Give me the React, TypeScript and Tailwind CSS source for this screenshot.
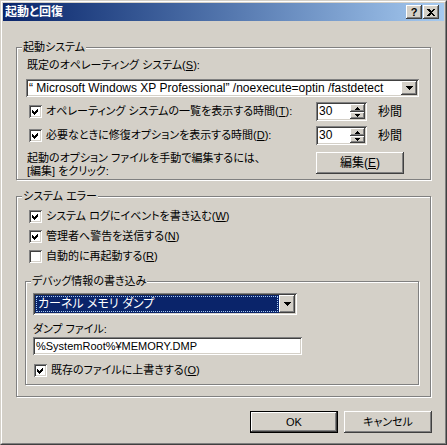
import type { ReactNode } from "react"

const raised =
  "bg-[#D4D0C8] shadow-[inset_-1px_-1px_#404040,inset_1px_1px_#fff,inset_-2px_-2px_#808080,inset_2px_2px_#D4D0C8]"
const sunken =
  "shadow-[inset_1px_1px_#808080,inset_-1px_-1px_#fff,inset_2px_2px_#404040,inset_-2px_-2px_#D4D0C8]"

function Check({ on }: { on: boolean }) {
  return (
    <span className={`block w-[13px] h-[13px] shrink-0 bg-white ${sunken}`}>
      {on && (
        <svg width="13" height="13" viewBox="0 0 13 13" className="block" shapeRendering="crispEdges">
          <path d="M3 5L5 7L9 3V6L5 10L3 8Z" fill="#000" />
        </svg>
      )}
    </span>
  )
}

function CheckRow({ on, children, className = "" }: { on: boolean; children: ReactNode; className?: string }) {
  return (
    <div className={`flex items-center h-[13px] ${className}`}>
      <Check on={on} />
      <span className="ml-[4px] leading-[13px] whitespace-nowrap">{children}</span>
    </div>
  )
}

function Arrow({ up = false, small = false }: { up?: boolean; small?: boolean }) {
  const w = small ? 5 : 7
  const h = small ? 3 : 4
  return (
    <svg width={w} height={h} viewBox={`0 0 ${w} ${h}`} shapeRendering="crispEdges" className="block">
      <path d={up ? `M0 ${h}L${w / 2} 0L${w} ${h}Z` : `M0 0L${w} 0L${w / 2} ${h}Z`} fill="#000" />
    </svg>
  )
}

function DropBtn() {
  return (
    <div className={`flex w-[16px] h-full shrink-0 items-center justify-center ${raised}`}>
      <Arrow />
    </div>
  )
}

function Spin() {
  return (
    <div className={`flex w-[51px] h-[19px] bg-white p-[2px] ${sunken}`}>
      <span className="flex-1 pl-[1px] leading-[15px] text-[12px]">30</span>
      <div className="flex w-[15px] flex-col">
        <div className={`flex h-[8px] items-center justify-center ${raised}`}>
          <Arrow up small />
        </div>
        <div className={`flex h-[7px] items-center justify-center ${raised}`}>
          <Arrow small />
        </div>
      </div>
    </div>
  )
}

function Group({ title, className, children }: { title: string; className: string; children: ReactNode }) {
  return (
    <div className={`relative border border-[#808080] shadow-[1px_1px_0_#fff,inset_1px_1px_0_#fff] ${className}`}>
      <span className="absolute left-[5px] top-[-8px] bg-[#D4D0C8] px-px leading-[14px] whitespace-nowrap">
        {title}
      </span>
      {children}
    </div>
  )
}

export default function App() {
  return (
    <div className="w-[447px] h-[445px] border border-t-[#D4D0C8] border-l-[#D4D0C8] border-b-[#404040] border-r-[#404040] bg-[#D4D0C8] text-[11px] text-black font-['Liberation_Sans','Noto_Sans_CJK_JP',sans-serif] [font-feature-settings:'palt']">
      <div className="h-full border border-t-white border-l-white border-b-[#808080] border-r-[#808080] p-px">
        {/* title bar */}
        <div className="flex h-[18px] items-center bg-linear-to-r from-[#0A246A] to-[#A6CAF0] pl-[2px] pr-[5px]">
          <span className="flex-1 font-bold text-white text-[12px] leading-[18px]">起動と回復</span>
          <div className={`flex w-[16px] h-[14px] items-center justify-center text-[11px] font-bold leading-none ${raised}`}>
            ?
          </div>
          <div className={`ml-[1px] flex w-[16px] h-[14px] items-center justify-center ${raised}`}>
            <svg width="8" height="7" viewBox="0 0 8 7" shapeRendering="crispEdges">
              <path d="M0 0H2L4 2L6 0H8L5 3.5L8 7H6L4 5L2 7H0L3 3.5Z" fill="#000" />
            </svg>
          </div>
        </div>

        {/* 起動システム */}
        <Group title="起動システム" className="ml-[13px] mt-[26px] w-[415px] h-[133px]">
          <div className="pl-[10px] pt-[10px] leading-[14px]">
            既定のオペレーティング システム(<u>S</u>):
          </div>
          <div className={`ml-[9px] mt-[7px] flex w-[393px] h-[18px] bg-white p-[2px] ${sunken}`}>
            <span className="flex-1 overflow-hidden whitespace-nowrap pl-[1px] text-[12px] leading-[14px]">
              “ Microsoft Windows XP Professional” /noexecute=optin /fastdetect
            </span>
            <DropBtn />
          </div>
          <div className="ml-[12px] mt-[5px] flex h-[19px] items-center">
            <div className="w-[287px]">
              <CheckRow on>
                オペレーティング システムの一覧を表示する時間(<u>T</u>):
              </CheckRow>
            </div>
            <Spin />
            <span className="ml-[11px] text-[12px]">秒間</span>
          </div>
          <div className="ml-[12px] mt-[5px] flex h-[19px] items-center">
            <div className="w-[287px]">
              <CheckRow on>
                必要なときに修復オプションを表示する時間(<u>D</u>):
              </CheckRow>
            </div>
            <Spin />
            <span className="ml-[11px] text-[12px]">秒間</span>
          </div>
          <div className="ml-[10px] mt-[7px] flex items-start">
            <div className="w-[289px] leading-[13px]">
              <div>起動のオプション ファイルを手動で編集するには、</div>
              <div>[編集] をクリック:</div>
            </div>
            <div className={`flex w-[88px] h-[22px] items-center justify-center text-[12px] ${raised}`}>
              編集(<u>E</u>)
            </div>
          </div>
        </Group>

        {/* システム エラー */}
        <Group title="システム エラー" className="ml-[13px] mt-[16px] w-[415px] h-[201px]">
          <CheckRow on className="ml-[12px] mt-[13px]">
            システム ログにイベントを書き込む(<u>W</u>)
          </CheckRow>
          <CheckRow on className="ml-[12px] mt-[7px]">
            管理者へ警告を送信する(<u>N</u>)
          </CheckRow>
          <CheckRow on={false} className="ml-[12px] mt-[7px]">
            自動的に再起動する(<u>R</u>)
          </CheckRow>

          <Group title="デバッグ情報の書き込み" className="ml-[8px] mt-[18px] w-[394px] h-[104px]">
            <div className={`ml-[7px] mt-[11px] flex w-[264px] h-[22px] bg-white p-[2px] ${sunken}`}>
              <div className="flex-1 bg-[#0A246A] p-px">
                <div className="h-full border border-dotted border-[#A6CAF0] pl-px text-[12px] leading-[14px] text-white whitespace-nowrap">
                  カーネル メモリ ダンプ
                </div>
              </div>
              <DropBtn />
            </div>
            <div className="ml-[7px] mt-[7px] leading-[14px]">ダンプ ファイル:</div>
            <div className={`ml-[7px] mt-px w-[269px] h-[18px] bg-white p-[2px] pl-[3px] leading-[14px] ${sunken}`}>
              %SystemRoot%¥MEMORY.DMP
            </div>
            <CheckRow on className="ml-[8px] mt-[9px]">
              既存のファイルに上書きする(<u>O</u>)
            </CheckRow>
          </Group>
        </Group>

        {/* buttons */}
        <div className="mt-[14px] flex justify-end gap-[6px] pr-[12px]">
          <div className="w-[88px] h-[22px] border border-black">
            <div className={`flex h-full items-center justify-center ${raised}`}>OK</div>
          </div>
          <div className={`flex w-[88px] h-[22px] items-center justify-center ${raised}`}>キャンセル</div>
        </div>
      </div>
    </div>
  )
}
